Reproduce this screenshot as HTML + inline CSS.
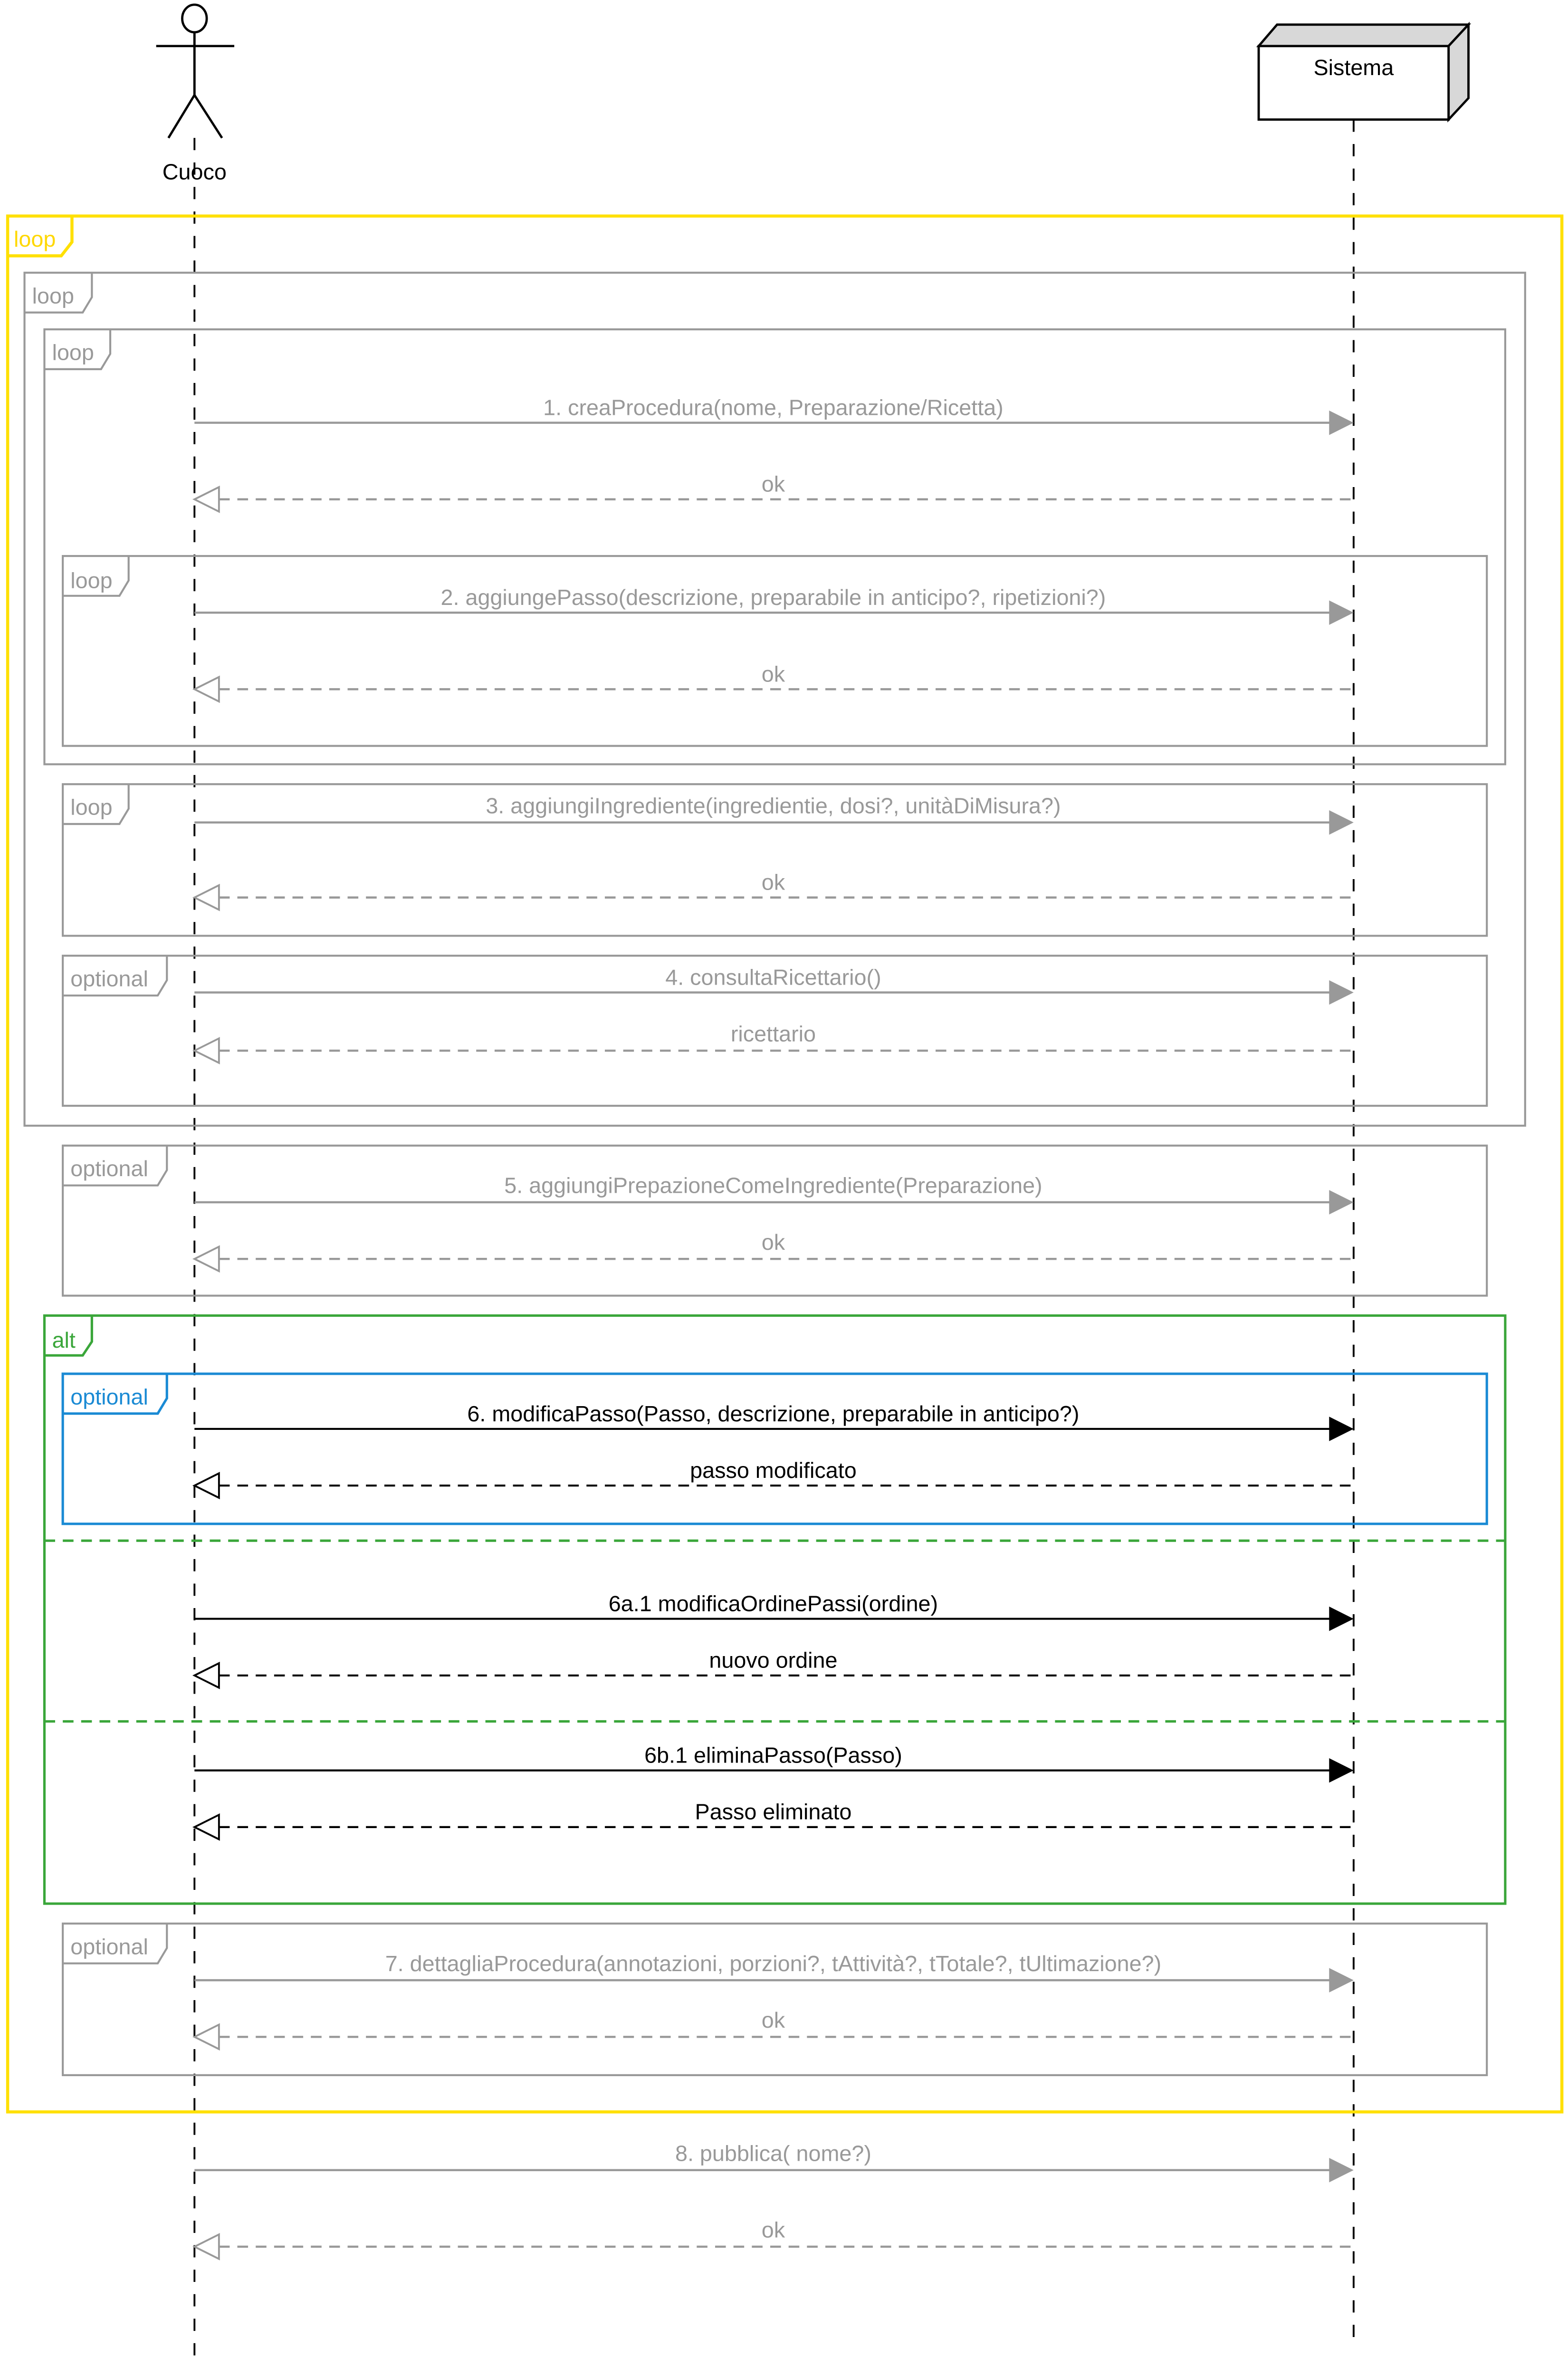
<!DOCTYPE html>
<html><head><meta charset="utf-8"><style>html,body{margin:0;padding:0;background:#fff;width:3300px;height:5060px;overflow:hidden}svg{display:block}</style></head>
<body>
<svg width="3300" height="5060" viewBox="0 0 1024 1570" xmlns="http://www.w3.org/2000/svg" font-family="Liberation Sans, sans-serif" font-size="14.5">
<rect width="1024" height="1570" fill="#fff"/>
<g stroke="#000" stroke-width="1.5" fill="none">
<ellipse cx="127" cy="12" rx="8" ry="9"/>
<line x1="127" y1="21" x2="127" y2="62"/>
<line x1="102" y1="30" x2="153" y2="30"/>
<line x1="127" y1="62" x2="110" y2="90"/>
<line x1="127" y1="62" x2="145" y2="90"/>
</g>
<text x="127" y="117" text-anchor="middle" fill="#000">Cuoco</text>
<polygon points="822,30 834,16 959,16 946,30" fill="#d8d8d8" stroke="#000" stroke-width="1.5"/>
<polygon points="946,30 959,16 959,64 946,78" fill="#d8d8d8" stroke="#000" stroke-width="1.5"/>
<rect x="822" y="30" width="124" height="48" fill="#fff" stroke="#000" stroke-width="1.5"/>
<text x="884" y="49" text-anchor="middle" fill="#000">Sistema</text>
<line x1="127" y1="90" x2="127" y2="1542" stroke="#000" stroke-width="1.2" stroke-dasharray="8,8"/>
<line x1="884" y1="78" x2="884" y2="1530" stroke="#000" stroke-width="1.2" stroke-dasharray="8,8"/>

<g stroke="#FFE000" stroke-width="2" fill="none">
<rect x="5" y="141" width="1015" height="1238"/>
<polyline points="47,141 47,158 40,167 5,167"/>
</g>
<text x="9" y="161" fill="#FFD800">loop</text>

<g stroke="#999" stroke-width="1.3" fill="none">
<rect x="16" y="178" width="980" height="557"/>
<polyline points="60,178 60,194 54,204 16,204"/>
<rect x="29" y="215" width="954" height="284"/>
<polyline points="72,215 72,231 66,241 29,241"/>
<rect x="41" y="363" width="930" height="124"/>
<polyline points="84,363 84,379 78,389 41,389"/>
<rect x="41" y="512" width="930" height="99"/>
<polyline points="84,512 84,528 78,538 41,538"/>
<rect x="41" y="624" width="930" height="98"/>
<polyline points="109,624 109,640 103,650 41,650"/>
<rect x="41" y="748" width="930" height="98"/>
<polyline points="109,748 109,764 103,774 41,774"/>
<rect x="41" y="1256" width="930" height="99"/>
<polyline points="109,1256 109,1272 103,1282 41,1282"/>
</g>
<g fill="#999">
<text x="21" y="198">loop</text>
<text x="34" y="235">loop</text>
<text x="46" y="384">loop</text>
<text x="46" y="532">loop</text>
<text x="46" y="644">optional</text>
<text x="46" y="768">optional</text>
<text x="46" y="1276">optional</text>
</g>

<g stroke="#3aa63a" stroke-width="1.6" fill="none">
<rect x="29" y="859" width="954" height="384"/>
<polyline points="60,859 60,876 54,885 29,885"/>
<line x1="29" y1="1006" x2="983" y2="1006" stroke-dasharray="7,5"/>
<line x1="29" y1="1124" x2="983" y2="1124" stroke-dasharray="7,5"/>
</g>
<text x="34" y="880" fill="#3aa63a">alt</text>
<g stroke="#1a8ad4" stroke-width="1.6" fill="none">
<rect x="41" y="897" width="930" height="98"/>
<polyline points="109,897 109,913 103,923 41,923"/>
</g>
<text x="46" y="917" fill="#1a8ad4">optional</text>

<defs>
<g id="ga"><polygon points="868,-8 884,0 868,8" fill="#999"/></g>
<g id="gr"><polygon points="143,-8 127,0 143,8" fill="#fff" stroke="#999" stroke-width="1.2"/></g>
<g id="ba"><polygon points="868,-8 884,0 868,8" fill="#000"/></g>
<g id="br"><polygon points="143,-8 127,0 143,8" fill="#fff" stroke="#000" stroke-width="1.2"/></g>
</defs>

<g fill="#999" stroke="none" text-anchor="middle">
<text x="505" y="271">1. creaProcedura(nome, Preparazione/Ricetta)</text>
<text x="505" y="321">ok</text>
<text x="505" y="395">2. aggiungePasso(descrizione, preparabile in anticipo?, ripetizioni?)</text>
<text x="505" y="445">ok</text>
<text x="505" y="531">3. aggiungiIngrediente(ingredientie, dosi?, unitàDiMisura?)</text>
<text x="505" y="581">ok</text>
<text x="505" y="643">4. consultaRicettario()</text>
<text x="505" y="680">ricettario</text>
<text x="505" y="779">5. aggiungiPrepazioneComeIngrediente(Preparazione)</text>
<text x="505" y="816">ok</text>
<text x="505" y="1287">7. dettagliaProcedura(annotazioni, porzioni?, tAttività?, tTotale?, tUltimazione?)</text>
<text x="505" y="1324">ok</text>
<text x="505" y="1411">8. pubblica( nome?)</text>
<text x="505" y="1461">ok</text>
</g>
<g stroke="#999" stroke-width="1.4">
<line x1="127" y1="276" x2="870" y2="276"/>
<line x1="143" y1="326" x2="884" y2="326" stroke-dasharray="7,5"/>
<line x1="127" y1="400" x2="870" y2="400"/>
<line x1="143" y1="450" x2="884" y2="450" stroke-dasharray="7,5"/>
<line x1="127" y1="537" x2="870" y2="537"/>
<line x1="143" y1="586" x2="884" y2="586" stroke-dasharray="7,5"/>
<line x1="127" y1="648" x2="870" y2="648"/>
<line x1="143" y1="686" x2="884" y2="686" stroke-dasharray="7,5"/>
<line x1="127" y1="785" x2="870" y2="785"/>
<line x1="143" y1="822" x2="884" y2="822" stroke-dasharray="7,5"/>
<line x1="127" y1="1293" x2="870" y2="1293"/>
<line x1="143" y1="1330" x2="884" y2="1330" stroke-dasharray="7,5"/>
<line x1="127" y1="1417" x2="870" y2="1417"/>
<line x1="143" y1="1467" x2="884" y2="1467" stroke-dasharray="7,5"/>
</g>
<use href="#ga" y="276"/><use href="#gr" y="326"/>
<use href="#ga" y="400"/><use href="#gr" y="450"/>
<use href="#ga" y="537"/><use href="#gr" y="586"/>
<use href="#ga" y="648"/><use href="#gr" y="686"/>
<use href="#ga" y="785"/><use href="#gr" y="822"/>
<use href="#ga" y="1293"/><use href="#gr" y="1330"/>
<use href="#ga" y="1417"/><use href="#gr" y="1467"/>

<g fill="#000" text-anchor="middle">
<text x="505" y="928">6. modificaPasso(Passo, descrizione, preparabile in anticipo?)</text>
<text x="505" y="965">passo modificato</text>
<text x="505" y="1052">6a.1 modificaOrdinePassi(ordine)</text>
<text x="505" y="1089">nuovo ordine</text>
<text x="505" y="1151">6b.1 eliminaPasso(Passo)</text>
<text x="505" y="1188">Passo eliminato</text>
</g>
<g stroke="#000" stroke-width="1.3">
<line x1="127" y1="933" x2="870" y2="933"/>
<line x1="143" y1="970" x2="884" y2="970" stroke-dasharray="7,5"/>
<line x1="127" y1="1057" x2="870" y2="1057"/>
<line x1="143" y1="1094" x2="884" y2="1094" stroke-dasharray="7,5"/>
<line x1="127" y1="1156" x2="870" y2="1156"/>
<line x1="143" y1="1193" x2="884" y2="1193" stroke-dasharray="7,5"/>
</g>
<use href="#ba" y="933"/><use href="#br" y="970"/>
<use href="#ba" y="1057"/><use href="#br" y="1094"/>
<use href="#ba" y="1156"/><use href="#br" y="1193"/>
</svg>
</body></html>
